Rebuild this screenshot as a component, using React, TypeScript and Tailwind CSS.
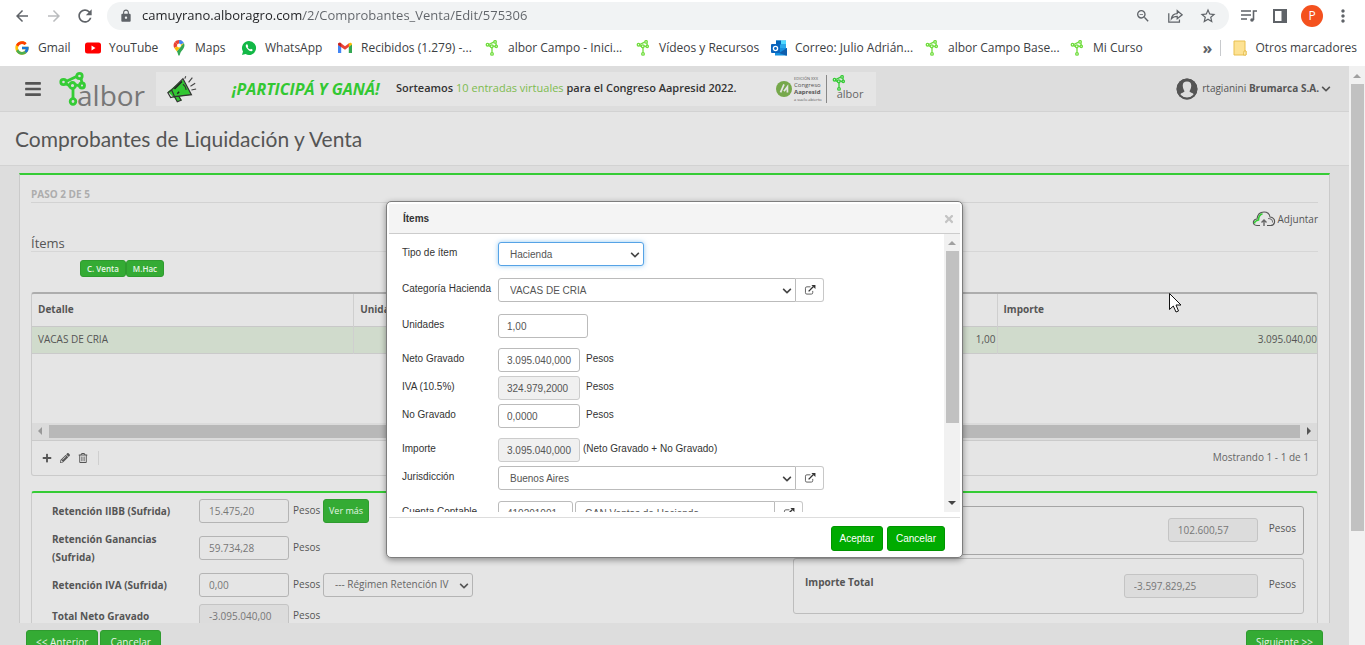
import * as React from "react";
import { FcGoogle } from "react-icons/fc";
import { FaBars, FaChevronDown, FaPencilAlt, FaPlus, FaRegTrashAlt, FaTimes } from "react-icons/fa";
import {
  MdArrowBack,
  MdArrowForward,
  MdLock,
  MdMoreVert,
  MdOutlineStarBorder,
  MdOutlineZoomOut,
  MdRefresh,
} from "react-icons/md";

/* ---------- icons ---------- */

function AlborMark({ className, color = "#6fdc3c" }: { className?: string; color?: string }) {
  return (
    <svg viewBox="0 0 28 34" className={className} fill="none" stroke={color} strokeWidth="2.800">
      <path d="M7 9.500 L17.500 4.500 M22 6.500 L23 11 M20.500 14 L16 12.500 M6.500 11.500 L11 14 M14 17 V27" />
      <circle cx="4.500" cy="10" r="2.700" />
      <circle cx="20.500" cy="4" r="2.700" />
      <circle cx="23" cy="13.500" r="2.500" />
      <circle cx="13.500" cy="13.500" r="3" />
      <circle cx="14" cy="29.500" r="2.800" />
    </svg>
  );
}

function YouTubeIcon() {
  return (
    <svg viewBox="0 0 16 16" className="size-4">
      <rect x="0" y="2.500" width="16" height="11" rx="2.500" fill="#f00" />
      <path d="M6.500 5.500 L10.500 8 L6.500 10.500 Z" fill="#fff" />
    </svg>
  );
}

function MapsIcon() {
  return (
    <svg viewBox="0 0 16 16" className="size-4">
      <path d="M8 0 A5.500 5.500 0 0 0 3.700 2.100 L8 5.600 L11 1 A5.500 5.500 0 0 0 8 0 Z" fill="#ea4335" />
      <path d="M8 0 A5.500 5.500 0 0 1 12.900 3 L8 5.600 Z" fill="#4285f4" />
      <path d="M3.700 2.100 A5.500 5.500 0 0 0 3.300 8 L8 5.600 Z" fill="#ea4335" />
      <path d="M3.300 8 C4 9.400 5 10.300 5.900 11.500 L12.900 3 L8 5.600 Z" fill="#fbbc04" />
      <path d="M12.900 3 A5.500 5.500 0 0 1 12.600 8.200 C11.600 10.200 9.500 11.500 8.900 14.500 Q8 17 7.100 14.500 C6.800 13.200 6.400 12.300 5.900 11.500 Z" fill="#34a853" />
      <circle cx="8" cy="5.500" r="2" fill="#fff" />
    </svg>
  );
}

function WhatsAppIcon() {
  return (
    <svg viewBox="0 0 16 16" className="size-4">
      <path d="M8 1 A7 7 0 1 1 4.600 14.100 L1 15 L2 11.600 A7 7 0 0 1 8 1 Z" fill="#12b846" />
      <path
        d="M5.600 4.300 C4.300 5 4.500 6.800 6 8.600 C7.600 10.600 9.600 11.800 11 11 C12 10.300 11.700 9.600 11.300 9.400 L10 8.800 L9.200 9.600 C8 9.100 7.200 8.300 6.700 7.200 L7.200 6.400 L6.500 4.600 Z"
        fill="#fff"
      />
    </svg>
  );
}

function GmailIcon() {
  return (
    <svg viewBox="0 0 16 16" className="size-4">
      <path d="M1 4 V13 H4.200 V6.500 Z" fill="#4285f4" />
      <path d="M15 4 V13 H11.800 V6.500 Z" fill="#34a853" />
      <path d="M1 4.500 C1 2.800 2.700 2.200 4 3.200 L8 6.300 L12 3.200 V6.700 L8 9.800 L1 5 Z" fill="#ea4335" />
      <path d="M11.800 3.300 C13.300 2.200 15 2.800 15 4.500 L11.800 7 Z" fill="#fbbc04" />
      <path d="M1 4.500 L4.200 6.900 V3.300 C2.700 2.300 1 2.900 1 4.500 Z" fill="#c5221f" />
    </svg>
  );
}

function OutlookIcon() {
  return (
    <svg viewBox="0 0 16 16" className="size-4">
      <rect x="5" y="0.500" width="10" height="9" fill="#28a8ea" />
      <rect x="5" y="0.500" width="5" height="4" fill="#0364b8" />
      <rect x="10" y="0.500" width="5" height="3.500" fill="#50d9ff" />
      <path d="M4 8 L16 8 V15.500 H4 Z" fill="#1490df" />
      <path d="M16 8 L8 13 L15 15.500 H16 Z" fill="#0f5fae" />
      <rect x="0" y="4" width="9" height="9" rx="1" fill="#0a65bd" />
      <circle cx="4.500" cy="8.500" r="2.100" fill="none" stroke="#fff" strokeWidth="1.300" />
    </svg>
  );
}

function FolderIcon() {
  return (
    <svg viewBox="0 0 14 16" className="h-4 w-3.5">
      <path d="M1 1 H12 V11 H13 V15 H1 Z" fill="#fde293" stroke="#e8bf4e" />
      <path d="M11 11 H13 V15 H10.500 Z" fill="#fff3c4" stroke="#e8bf4e" />
    </svg>
  );
}

function ShareIcon() {
  return (
    <svg viewBox="0 0 18 18" className="size-4" fill="none" stroke="#5f6368" strokeWidth="1.400">
      <path d="M2 6 V16 H14 V13" />
      <path d="M5 12 C5.500 8 8 6.300 11.500 6.200 V3 L17 7.700 L11.500 12 V9.300 C8.500 9.300 6.500 10 5 12 Z" />
    </svg>
  );
}

function PlaylistIcon() {
  return (
    <svg viewBox="0 0 16 14" className="h-3.5 w-4" fill="none" stroke="#5f6368" strokeWidth="1.600">
      <path d="M0 2 H10 M0 6 H10 M0 10 H6 M12.500 11 V2 H16" />
      <circle cx="11" cy="11" r="1.800" fill="#5f6368" stroke="none" />
    </svg>
  );
}

function SidePanelIcon() {
  return (
    <svg viewBox="0 0 14 14" className="size-3.5">
      <rect x="1" y="1" width="12" height="12" fill="none" stroke="#5f6368" strokeWidth="2" />
      <rect x="8.500" y="1" width="5" height="12" fill="#5f6368" />
    </svg>
  );
}

function Megaphone() {
  return (
    <svg viewBox="0 0 34 28" className="h-7 w-8">
      <path d="M2 17 L18 4 L27 20 L8 23 Z" fill="#32c832" />
      <path d="M8 22 L13 20.500 L17 26 L12 27.500 Z" fill="#32c832" />
      <path
        d="M2 18 L5 23 L9 22 L6 15 Z M6 15 L18 3 L27 20 L9 22 M9 22 L12 27.500 L16 26 L13.500 21.500 M18 9 Q21 11 21.500 15"
        fill="none"
        stroke="#333"
        strokeWidth="1.300"
      />
      <path d="M9 14 L17 6 M12 19 L14 17" stroke="#222" strokeWidth="1.600" />
      <path d="M20 3 L21 0.500 M24 7 L28 2 M26 11 L31 8 M27 15 L32 14" stroke="#444" strokeWidth="1.200" />
    </svg>
  );
}

function UserIcon() {
  return (
    <svg viewBox="0 0 22 22" className="size-5.5">
      <circle cx="11" cy="11" r="10.500" fill="#555" />
      <path
        d="M11 3.500 C7.800 3.500 6.500 5.500 6.800 8.200 C7 10.500 8 12.500 8.600 13.300 C8 14.500 5.500 14.700 4 16.500 A8.800 8.800 0 0 0 18 16.500 C16.500 14.700 14 14.500 13.400 13.300 C14 12.500 15 10.500 15.200 8.200 C15.500 5.500 14.200 3.500 11 3.500 Z"
        fill="#dedede"
      />
      <circle cx="11" cy="11" r="9.500" fill="none" stroke="#555" strokeWidth="1.800" />
    </svg>
  );
}

function CloudUpIcon() {
  return (
    <svg viewBox="0 0 24 16" className="h-4 w-6" fill="none" strokeWidth="1.100">
      <path d="M8 14.500 H5 C2 14.500 1 12.500 1.500 10.500 C2 8.700 3.500 8 5 8 C5.500 3.500 8 1 12 1 C15.500 1 17.500 3 18 6 C21 6.500 23 8.500 22.500 11.500 C22 13.500 20.500 14.500 18.500 14.500 H15" stroke="#555" />
      <path d="M2.500 12.500 C2.500 10 4.500 9.500 6.500 9 C6.500 5.500 8 3.500 10.500 2.700" stroke="#32cd32" strokeWidth="1.600" />
      <path d="M16 7.500 C19 7.500 21 9 20.500 11.500" stroke="#777" />
      <path d="M12 15 V9 M9.500 11.500 L12 9 L14.500 11.500" stroke="#666" strokeWidth="1.400" />
    </svg>
  );
}

function ExternalIcon() {
  return (
    <svg viewBox="0 0 12 11" className="h-2.5 w-3" fill="none" stroke="#555">
      <path d="M6.500 2 H2.500 Q1 2 1 3.500 V8.500 Q1 10 2.500 10 H7.500 Q9 10 9 8.500 V6.500" />
      <path d="M4.500 7 L9.500 2" stroke="#333" strokeWidth="1.500" />
      <path d="M7.500 0 H12 V4.500 Z" fill="#333" stroke="none" />
    </svg>
  );
}

function Triangle({ className }: { className?: string }) {
  return (
    <svg viewBox="0 0 8 4" className={`h-1 w-2 ${className}`}>
      <path d="M0 4 L4 0 L8 4 Z" fill="currentColor" />
    </svg>
  );
}

/* ---------- browser ---------- */

const bookmarks = [
  { label: "Gmail", icon: <FcGoogle className="size-4" />, width: "w-[71px]" },
  { label: "YouTube", icon: <YouTubeIcon />, width: "w-[86px]" },
  { label: "Maps", icon: <MapsIcon />, width: "w-[70px]" },
  { label: "WhatsApp", icon: <WhatsAppIcon />, width: "w-[96px]" },
  { label: "Recibidos (1.279) -...", icon: <GmailIcon />, width: "w-[147px]" },
  { label: "albor Campo - Inici...", icon: <AlborMark className="size-4" />, width: "w-[151px]" },
  { label: "Vídeos y Recursos", icon: <AlborMark className="size-4" />, width: "w-[136px]" },
  { label: "Correo: Julio Adrián...", icon: <OutlookIcon />, width: "w-[153px]" },
  { label: "albor Campo Base...", icon: <AlborMark className="size-4" />, width: "w-[145px]" },
  { label: "Mi Curso", icon: <AlborMark className="size-4" />, width: "w-[90px]" },
];

function BrowserBar() {
  return (
    <div className="shrink-0 bg-white font-['Open_Sans',sans-serif] text-[#3c4043]">
      <div className="flex h-8 items-center pl-[13px] pr-3 text-[#5f6368]">
        <button aria-label="Atrás" className="mr-3.5">
          <MdArrowBack className="size-4.5" />
        </button>
        <button aria-label="Adelante" className="mr-3 text-[#babcbe]">
          <MdArrowForward className="size-4.5" />
        </button>
        <button aria-label="Recargar" className="mr-3">
          <MdRefresh className="size-5" />
        </button>
        <div className="flex h-7 flex-1 items-center rounded-full bg-[#f1f3f4] px-3">
          <MdLock className="mr-[9px] size-3.5 shrink-0" />
          <input
            aria-label="Dirección"
            defaultValue="camuyrano.alboragro.com/2/Comprobantes_Venta/Edit/575306"
            className="min-w-0 flex-1 bg-[linear-gradient(90deg,#202124_161px,#5f6368_161px)] bg-clip-text text-[13px] text-transparent outline-none"
          />
          <button aria-label="Zoom" className="mr-4">
            <MdOutlineZoomOut className="size-4" />
          </button>
          <button aria-label="Compartir" className="mr-4">
            <ShareIcon />
          </button>
          <button aria-label="Favorito">
            <MdOutlineStarBorder className="size-4.5" />
          </button>
        </div>
        <button aria-label="Multimedia" className="ml-3 mr-4">
          <PlaylistIcon />
        </button>
        <button aria-label="Panel lateral" className="mr-3.5">
          <SidePanelIcon />
        </button>
        <button className="mr-2.5 size-5.5 rounded-full bg-[#f4511e] text-xs text-white">P</button>
        <button aria-label="Menú">
          <MdMoreVert className="size-5" />
        </button>
      </div>
      <div className="flex h-8.5 items-center pl-3.5 pr-2 pb-0.5 text-xs whitespace-nowrap">
        {bookmarks.map((b) => (
          <a key={b.label} href="#" className={`flex shrink-0 items-center gap-2 ${b.width}`}>
            {b.icon}
            {b.label}
          </a>
        ))}
        <span className="ml-auto mr-2 text-base font-bold text-[#5f6368]">»</span>
        <a href="#" className="flex items-center gap-2 border-l border-[#c8cacd] pl-3">
          <FolderIcon />
          Otros marcadores
        </a>
      </div>
    </div>
  );
}

/* ---------- page controls ---------- */

function Field({ id, value, width, readOnly }: { id: string; value: string; width: string; readOnly?: boolean }) {
  return (
    <input
      id={id}
      defaultValue={value}
      readOnly={readOnly}
      className={`h-6 shrink-0 rounded-[3px] border pl-[9px] pr-2 text-[10px] outline-none ${width} ${
        readOnly ? "border-[#c4c4c4] bg-[#dcdcdc] text-[#777]" : "border-[#b4b4b4] bg-[#e5e5e5] text-[#777]"
      }`}
    />
  );
}

function GreenButton({ children, className = "" }: { children: React.ReactNode; className?: string }) {
  return (
    <button className={`rounded-[3px] border border-[#2f9b2f] bg-[#34ab34] text-[#e6f5e6] ${className}`}>
      {children}
    </button>
  );
}

function AppHeader() {
  return (
    <header className="flex h-11.5 items-center border-b border-[#d2d2d2] bg-[#dddddd] pl-6">
      <button aria-label="Menú" className="mr-[17px] text-[#555]">
        <FaBars className="size-4.5" />
      </button>
      <a href="#" className="flex h-full w-[97px] items-end pb-1">
        <AlborMark className="h-9 w-7" color="#35cc35" />
        <span className="-ml-2.5 font-['Open_Sans',sans-serif] text-[28px] font-medium leading-6 text-[#777]">albor</span>
      </a>
      <a href="#" className="flex h-8.5 w-[720px] items-center bg-[#e5e5e5] pl-2.5 font-['Open_Sans',sans-serif] whitespace-nowrap">
        <Megaphone />
        <span className="ml-[34px] w-[164px] text-base font-bold italic text-[#32c832]">¡PARTICIPÁ Y GANÁ!</span>
        <span className="w-[380px] text-[11px] font-semibold text-[#333]">
          Sorteamos <span className="font-medium text-[#7dbb4f]">10 entradas virtuales</span> para el Congreso Aapresid 2022.
        </span>
        <svg viewBox="0 0 14 14" className="size-4">
          <circle cx="7" cy="7" r="7" fill="#76a84b" />
          <path d="M4 10 L7 3 M7 9 L10 5 V10" stroke="#e5e5e5" strokeWidth="1.500" fill="none" />
        </svg>
        <span className="ml-0.5 border-r border-[#888] pr-1 text-[6px] leading-[7px] text-[#555]">
          <span className="block text-[4px]">EDICIÓN XXX</span>
          Congreso
          <b className="block">Aapresid</b>
          <span className="block text-[4px]">a suelo abierto</span>
        </span>
        <AlborMark className="mb-3 ml-1 size-4" color="#35cc35" />
        <span className="-ml-2.5 mt-3 text-[11px] text-[#666]">albor</span>
      </a>
      <button className="ml-auto mr-[18px] flex items-center gap-1 font-['Open_Sans',sans-serif] text-[10px] text-[#555]">
        <UserIcon />
        <span>
          rtagianini <b>Brumarca S.A.</b>
        </span>
        <FaChevronDown className="-ml-0.5 size-2.5" />
      </button>
    </header>
  );
}

function ItemsTable() {
  const cell = "h-[27px] border-r border-[#cfcfcf] last:border-r-0";
  return (
    <div className="mt-[15px] rounded-[3px] border border-t-2 border-[#cacaca] border-t-[#adadad]">
      <table className="w-full table-fixed text-[10px] text-[#555]">
        <thead>
          <tr className="h-8 border-b border-[#c8c8c8] text-left">
            <th className="border-r border-[#cfcfcf] px-1.5">Detalle</th>
            <th className="border-r border-[#cfcfcf] px-1.5">Unidades</th>
            <th className="border-r border-[#cfcfcf] px-1.5"></th>
            <th className="w-80 px-1.5">Importe</th>
          </tr>
        </thead>
        <tbody>
          <tr className="border-b border-[#cacaca] bg-[#d0dbcc]">
            <td className={`${cell} px-1.5`}>VACAS DE CRIA</td>
            <td className={cell}></td>
            <td className={`${cell} pr-px text-right`}>1,00</td>
            <td className={`${cell} text-right`}>3.095.040,00</td>
          </tr>
        </tbody>
      </table>
      <div className="h-[69px]"></div>
      <div className="flex h-[18px] items-center border-b border-[#cacaca] bg-[#dbdbdb] px-1">
        <Triangle className="-rotate-90 text-[#999]" />
        <div className="mx-[5px] h-[13px] flex-1 bg-[#b8b8b8]"></div>
        <Triangle className="rotate-90 text-[#555]" />
      </div>
      <div className="flex h-[34px] items-center pl-2.5 pr-2 text-[#555]">
        <button aria-label="Agregar">
          <FaPlus className="size-2.5" />
        </button>
        <button aria-label="Editar" className="mx-2">
          <FaPencilAlt className="size-2.5" />
        </button>
        <button aria-label="Borrar" className="mr-2.5">
          <FaRegTrashAlt className="size-2.5" />
        </button>
        <span className="h-3.5 border-l border-[#cfcfcf]"></span>
        <span className="ml-auto text-[10px] text-[#666]">Mostrando 1 - 1 de 1</span>
      </div>
    </div>
  );
}

const retenciones = [
  { id: "iibb", label: "Retención IIBB (Sufrida)", value: "15.475,20", mb: "mb-[13px]" },
  { id: "ganancias", label: "Retención Ganancias (Sufrida)", value: "59.734,28", mb: "mb-[13px]" },
  { id: "iva", label: "Retención IVA (Sufrida)", value: "0,00", mb: "mb-[7px]" },
  { id: "neto", label: "Total Neto Gravado", value: "-3.095.040,00", mb: "mb-[7px]", readOnly: true },
];

function Totals() {
  return (
    <div className="mt-[15px] flex justify-between rounded-[3px] border border-t-2 border-[#cacaca] border-t-[#35cc35] pl-5 pr-[13px] pt-1.5 text-[10px] text-[#555]">
      <div>
        {retenciones.map((r) => (
          <div key={r.id} className={`flex h-6 items-center ${r.mb}`}>
            <label htmlFor={r.id} className="w-[147px] pr-4 font-bold leading-[18px]">
              {r.label}
            </label>
            <Field id={r.id} value={r.value} width="w-[90px]" readOnly={r.readOnly} />
            <span className="ml-1 w-[30px]">Pesos</span>
            {r.id === "iibb" && <GreenButton className="h-6 px-[5px] text-[9px] font-medium">Ver más</GreenButton>}
            {r.id === "iva" && (
              <div className="relative">
                <select
                  aria-label="Régimen Retención IVA"
                  className="h-6 w-[150px] appearance-none rounded-[3px] border border-[#b4b4b4] bg-[#e5e5e5] pl-[11px] pr-4 text-[#666]"
                >
                  <option>--- Régimen Retención IV</option>
                </select>
                <FaChevronDown className="pointer-events-none absolute right-1 top-2 size-2.5" />
              </div>
            )}
          </div>
        ))}
      </div>
      <div className="w-[511px] pt-[7px]">
        <div className="mb-[3px] flex h-[49px] justify-end rounded-[3px] border border-[#a5a5a5] pr-[7px] pt-[11px]">
          <Field id="reten" value="102.600,57" width="w-[90px]" readOnly />
          <label htmlFor="reten" className="ml-[11px] leading-5">
            Pesos
          </label>
        </div>
        <div className="flex h-14 justify-end rounded-[3px] border border-[#bdbdbd] pl-[11px] pr-[7px] pt-[15px]">
          <label htmlFor="total" className="mr-auto font-bold leading-4">
            Importe Total
          </label>
          <Field id="total" value="-3.597.829,25" width="w-[134px]" readOnly />
          <span className="ml-[11px] leading-5">Pesos</span>
        </div>
      </div>
    </div>
  );
}

/* ---------- dialog ---------- */

function DialogRow({ id, label, mb, children }: { id: string; label: string; mb: string; children: React.ReactNode }) {
  return (
    <div className={`flex h-6 ${mb}`}>
      <label htmlFor={id} className="w-24 shrink-0 leading-[22px]">
        {label}
      </label>
      {children}
    </div>
  );
}

function DialogInput({ id, value, width, readOnly }: { id: string; value: string; width: string; readOnly?: boolean }) {
  return (
    <input
      id={id}
      defaultValue={value}
      readOnly={readOnly}
      className={`h-6 shrink-0 rounded-[3px] border pl-2 text-[10px] text-[#555] outline-none ${width} ${
        readOnly ? "border-[#ccc] bg-[#f0f0f0]" : "border-[#bbb] bg-white"
      }`}
    />
  );
}

function DialogSelect({ id, value, className }: { id: string; value: string; className: string }) {
  return (
    <div className="relative">
      <select id={id} className={`h-6 appearance-none border bg-white pl-[11px] pr-6 text-[10px] text-[#555] outline-none ${className}`}>
        <option>{value}</option>
      </select>
      <FaChevronDown className="pointer-events-none absolute right-1 top-2 size-2.5 text-[#444]" />
    </div>
  );
}

function OpenButton() {
  return (
    <button aria-label="Abrir" className="flex h-6 w-7 items-center justify-center rounded-r-[3px] border border-l-0 border-[#c8c8c8] bg-white">
      <ExternalIcon />
    </button>
  );
}

function ItemsDialog() {
  const wideSelect = "w-[298px] rounded-l-[3px] border-[#bbb]";
  const action = "h-[25px] rounded-[3px] border border-[#009400] bg-[#00ab00] px-2 text-white";
  return (
    <div
      role="dialog"
      aria-label="Ítems"
      className="w-[577px] rounded-[5px] border border-[#7d7d7d] bg-white p-0.5 font-['Liberation_Sans',Arial,sans-serif] text-[10px] text-[#333] shadow-[0_2px_6px_rgba(0,0,0,0.4)]"
    >
      <div className="flex h-[30px] items-center justify-between border-b border-[#ccc] bg-[#f4f4f4] pl-3.5 pr-[5px]">
        <h2 className="font-bold">Ítems</h2>
        <button aria-label="Cerrar" className="text-[#c4c4c4]">
          <FaTimes className="size-3" />
        </button>
      </div>
      <div className="flex h-[278px] overflow-hidden">
        <div className="flex-1 pl-[13px] pt-2">
          <DialogRow id="tipo" label="Tipo de ítem" mb="mb-3">
            <DialogSelect
              id="tipo"
              value="Hacienda"
              className="w-[146px] rounded-[3px] border-[#56a3e6] shadow-[0_0_5px_rgba(82,168,236,0.6)]"
            />
          </DialogRow>
          <DialogRow id="categoria" label="Categoría Hacienda" mb="mb-3">
            <DialogSelect id="categoria" value="VACAS DE CRIA" className={wideSelect} />
            <OpenButton />
          </DialogRow>
          <DialogRow id="unidades" label="Unidades" mb="mb-2.5">
            <DialogInput id="unidades" value="1,00" width="w-[90px]" />
          </DialogRow>
          <DialogRow id="netog" label="Neto Gravado" mb="mb-1">
            <DialogInput id="netog" value="3.095.040,000" width="w-[82px]" />
            <span className="ml-1.5 leading-[22px]">Pesos</span>
          </DialogRow>
          <DialogRow id="ivag" label="IVA (10.5%)" mb="mb-1">
            <DialogInput id="ivag" value="324.979,2000" width="w-[82px]" readOnly />
            <span className="ml-1.5 leading-[22px]">Pesos</span>
          </DialogRow>
          <DialogRow id="nograv" label="No Gravado" mb="mb-2.5">
            <DialogInput id="nograv" value="0,0000" width="w-[82px]" />
            <span className="ml-1.5 leading-[22px]">Pesos</span>
          </DialogRow>
          <DialogRow id="importe" label="Importe" mb="mb-1">
            <DialogInput id="importe" value="3.095.040,000" width="w-[82px]" readOnly />
            <span className="ml-[3px] leading-[22px]">(Neto Gravado + No Gravado)</span>
          </DialogRow>
          <DialogRow id="jurisdiccion" label="Jurisdicción" mb="mb-[11px]">
            <DialogSelect id="jurisdiccion" value="Buenos Aires" className={wideSelect} />
            <OpenButton />
          </DialogRow>
          <DialogRow id="cuenta" label="Cuenta Contable" mb="mb-2.5">
            <DialogInput id="cuenta" value="410201001" width="w-[75px]" />
            <input
              aria-label="Nombre de la cuenta"
              defaultValue="GAN Ventas de Hacienda"
              className="ml-0.5 h-6 w-[200px] rounded-l-[3px] border border-[#bbb] pl-[9px] text-[#555] outline-none"
            />
            <OpenButton />
          </DialogRow>
        </div>
        <div className="flex w-4 flex-col items-center bg-[#f1f1f1] py-[7px]">
          <Triangle className="text-[#a0a0a0]" />
          <div className="mt-1.5 h-[172px] w-[13px] bg-[#c1c1c1]"></div>
          <Triangle className="mt-auto rotate-180 text-[#444]" />
        </div>
      </div>
      <div className="mt-[5px] flex h-[38px] justify-end gap-1 border-t border-[#ddd] pr-[15px] pt-2">
        <button className={action}>Aceptar</button>
        <button className={action}>Cancelar</button>
      </div>
    </div>
  );
}

export default function App() {
  return (
    <div className="flex h-screen flex-col overflow-hidden">
      <BrowserBar />
      <div className="relative flex min-h-0 flex-1">
        <div className="flex min-w-0 flex-1 flex-col bg-[#dddddd] font-['Open_Sans',sans-serif]">
          <AppHeader />
          <div className="border-b border-[#d2d2d2] bg-[#e5e5e5] pl-[15px]">
            <h1 className="font-[Lato,sans-serif] text-[21px] leading-[53px] text-[#555]">
              Comprobantes de Liquidación y Venta
            </h1>
          </div>
          <main className="min-h-0 flex-1 overflow-hidden px-[19px] pt-[7px]">
            <div className="border border-t-2 border-[#cacaca] border-t-[#35cc35] bg-[#e5e5e5] px-[11px] pt-[11px]">
              <div className="border-b border-[#d2d2d2] text-[10px] font-bold leading-4 text-[#adadad]">PASO 2 DE 5</div>
              <div className="flex h-8 items-center justify-end">
                <a href="#" className="flex items-center gap-0.5 text-[10px] text-[#555]">
                  <CloudUpIcon />
                  Adjuntar
                </a>
              </div>
              <h2 className="border-b border-[#d6d6d6] text-[13px] leading-4 text-[#555]">Ítems</h2>
              <div className="flex pl-[49px] pt-2">
                <GreenButton className="h-[17px] px-1.5 text-[8px] font-semibold">C. Venta</GreenButton>
                <GreenButton className="h-[17px] px-1.5 text-[8px] font-semibold">M.Hac</GreenButton>
              </div>
              <ItemsTable />
              <Totals />
            </div>
          </main>
          <footer className="flex h-[22px] shrink-0 items-start gap-0.5 overflow-hidden px-[26px] pt-[7px]">
            <GreenButton className="h-[25px] px-[9px] text-[10px] font-medium">&lt;&lt; Anterior</GreenButton>
            <GreenButton className="h-[25px] px-[9px] text-[10px] font-medium">Cancelar</GreenButton>
            <GreenButton className="ml-auto h-[25px] px-[9px] text-[10px] font-medium">Siguiente &gt;&gt;</GreenButton>
          </footer>
        </div>
        <div className="flex w-4 flex-col items-center bg-[#f1f1f1] pt-2">
          <Triangle className="text-[#a0a0a0]" />
          <div className="mt-1.5 h-[447px] w-[13px] bg-[#c1c1c1]"></div>
        </div>
        <div className="absolute inset-y-0 left-0 right-4 flex items-start justify-center pt-[135px]">
          <ItemsDialog />
        </div>
        <svg viewBox="0 0 13 20" className="absolute left-[1169px] top-[227px] h-5 w-[13px]">
          <path d="M0.500 0.500 V16.500 L4.300 13 L7 19 L9.500 18 L7 12 H12 Z" fill="#fff" stroke="#111" />
        </svg>
      </div>
    </div>
  );
}
